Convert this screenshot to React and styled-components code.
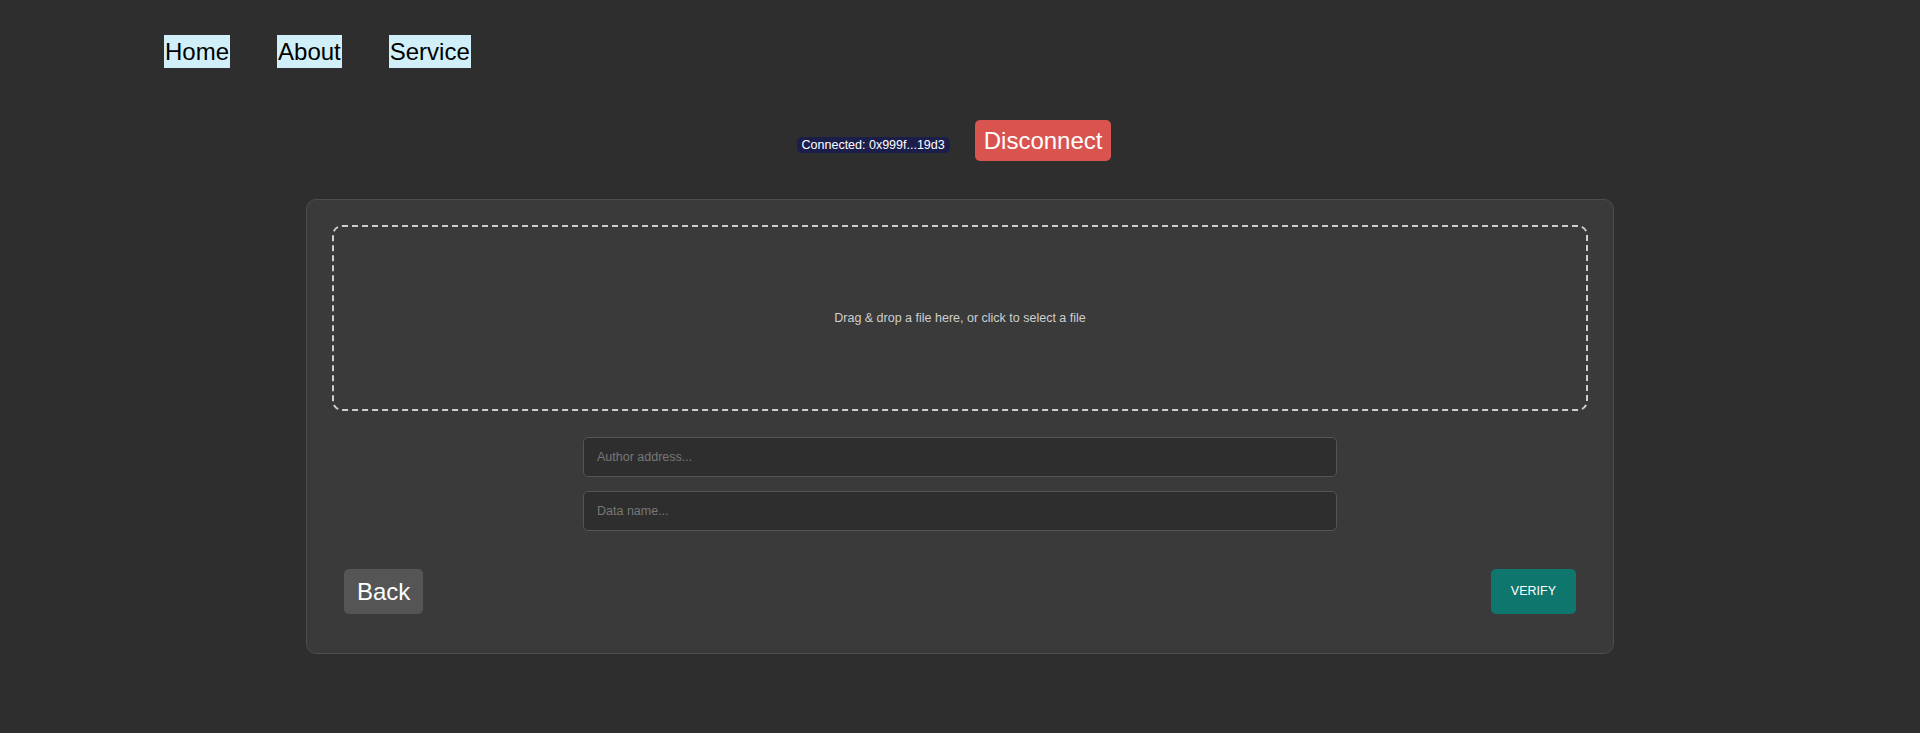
import React from 'react';
import styled, { createGlobalStyle } from 'styled-components';

const GlobalStyle = createGlobalStyle`
    body {
        margin: 0;
        background-color: #2e2e2e;
        font-family: 'Liberation Sans', Arial, sans-serif;
    }
`

const Page = styled.div`
    min-height: 733px;
`
const Nav = styled.nav`
    display: flex;
    gap: 47px;
    padding: 35px 0 0 164px;
`
const NavLink = styled.a`
    background-color: #d1eff9;
    color: #000;
    font-size: 24px;
    line-height: 27px;
    padding: 3px 1px;
    text-decoration: none;
    cursor: pointer;
`
const Status = styled.div`
    display: flex;
    justify-content: center;
    align-items: flex-start;
    gap: 25px;
    margin-top: 52px;
`
const Badge = styled.span`
    margin-top: 17px;
    background-color: #1b1e4b;
    color: #fff;
    font-size: 12.5px;
    line-height: 14px;
    padding: 1px 5px;
    border-radius: 5px;
`
const Button = styled.button`
    font-family: 'Liberation Sans', Arial, sans-serif;
    border: none;
    border-radius: 5px;
    color: #fff;
    cursor: pointer;
    background-color: ${(p) => p.$bg};
`
const BigButton = styled(Button)`
    font-size: 24px;
    line-height: 27px;
    padding: ${(p) => p.$pad};
    margin-right: ${(p) => p.$mr || '0'};
`
const SmallButton = styled(Button)`
    font-size: 12.5px;
    line-height: 15px;
    padding: 15px 20px;
`
const Card = styled.section`
    box-sizing: border-box;
    width: 1308px;
    margin: 38px auto 0;
    padding: 25px;
    background-color: #3a3a3a;
    border: 1px solid #4d4d4d;
    border-radius: 10px;
`
const DropZone = styled.div`
    box-sizing: border-box;
    height: 186px;
    border: 2px dashed #cfcfcf;
    border-radius: 10px;
    display: flex;
    align-items: center;
    justify-content: center;
    color: #cfcfcf;
    font-size: 12.5px;
    cursor: pointer;
`
const Fields = styled.div`
    display: flex;
    flex-direction: column;
    gap: 14px;
    width: 754px;
    margin: 26px auto 0;
`
const Input = styled.input`
    box-sizing: border-box;
    height: 40px;
    padding: 0 13px;
    background-color: #2e2e2e;
    border: 1px solid #555;
    border-radius: 5px;
    color: #ddd;
    font-family: 'Liberation Sans', Arial, sans-serif;
    font-size: 12.5px;
    outline: none;

    &::placeholder {
        color: #777;
    }
`
const Footer = styled.div`
    display: flex;
    justify-content: space-between;
    align-items: center;
    margin-top: 26px;
    padding: 12px 12px 14px;
`

const App = () => {
    return (
        <Page>
            <GlobalStyle />
            <Nav>
                <NavLink>Home</NavLink>
                <NavLink>About</NavLink>
                <NavLink>Service</NavLink>
            </Nav>
            <Status>
                <Badge>Connected: 0x999f...19d3</Badge>
                <BigButton $bg="#d9534f" $pad="7px 9px" $mr="12px">Disconnect</BigButton>
            </Status>
            <Card>
                <DropZone>Drag &amp; drop a file here, or click to select a file</DropZone>
                <Fields>
                    <Input placeholder="Author address..." />
                    <Input placeholder="Data name..." />
                </Fields>
                <Footer>
                    <BigButton $bg="#555" $pad="9px 13px">Back</BigButton>
                    <SmallButton $bg="#0f766e">VERIFY</SmallButton>
                </Footer>
            </Card>
        </Page>
    )
}

export default App;
